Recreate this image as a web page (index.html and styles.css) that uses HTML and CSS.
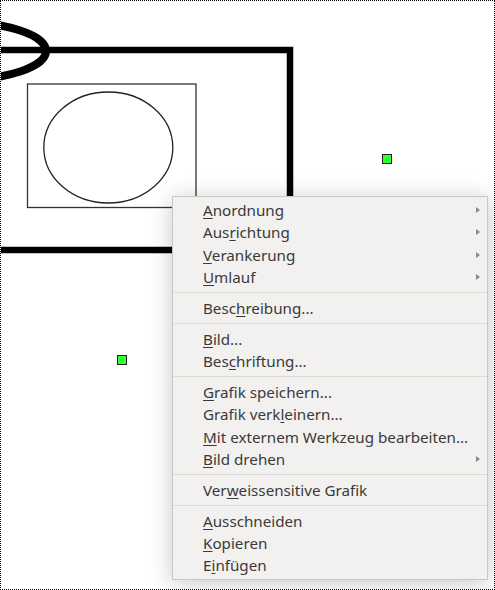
FILE: index.html
```html
<!DOCTYPE html>
<html>
<head>
<meta charset="utf-8">
<link rel="stylesheet" href="styles.css">
</head>
<body>
<div class="frame">
  <svg class="canvas" width="495" height="590" viewBox="0 0 495 590">
    <ellipse cx="-42" cy="51" rx="88" ry="29" fill="none" stroke="#000" stroke-width="8"/>
    <rect x="-20" y="50" width="310" height="200" fill="none" stroke="#000" stroke-width="6.5"/>
    <rect x="27.5" y="84" width="168.5" height="123.5" fill="none" stroke="#333" stroke-width="1.3"/>
    <ellipse cx="108.3" cy="147.5" rx="64.5" ry="55.5" fill="none" stroke="#222" stroke-width="1.3"/>
    <rect x="382.5" y="154.5" width="9" height="9" fill="#33ff33" stroke="#222" stroke-width="1"/>
    <rect x="117.5" y="355.5" width="9" height="9" fill="#33ff33" stroke="#222" stroke-width="1"/>
  </svg>
  <div class="menu">
    <div class="item sub"><span><u>A</u>nordnung</span><i class="arrow"></i></div>
    <div class="item sub"><span>Aus<u>r</u>ichtung</span><i class="arrow"></i></div>
    <div class="item sub"><span><u>V</u>erankerung</span><i class="arrow"></i></div>
    <div class="item sub"><span><u>U</u>mlauf</span><i class="arrow"></i></div>
    <div class="sep"></div>
    <div class="item"><span>Besc<u>h</u>reibung...</span></div>
    <div class="sep"></div>
    <div class="item"><span><u>B</u>ild...</span></div>
    <div class="item"><span>Bes<u>c</u>hriftung...</span></div>
    <div class="sep"></div>
    <div class="item"><span><u>G</u>rafik speichern...</span></div>
    <div class="item"><span>Grafik verk<u>l</u>einern...</span></div>
    <div class="item"><span><u>M</u>it externem Werkzeug bearbeiten...</span></div>
    <div class="item sub"><span><u>B</u>ild drehen</span><i class="arrow"></i></div>
    <div class="sep"></div>
    <div class="item"><span>Ver<u>w</u>eissensitive Grafik</span></div>
    <div class="sep"></div>
    <div class="item"><span><u>A</u>usschneiden</span></div>
    <div class="item"><span><u>K</u>opieren</span></div>
    <div class="item"><span>E<u>i</u>nfügen</span></div>
  </div>
</div>
</body>
</html>
```
FILE: styles.css
```css
html, body {
  margin: 0;
  padding: 0;
  background: #fff;
}
.frame {
  position: relative;
  width: 495px;
  height: 590px;
  box-sizing: border-box;
  border: 1px dotted #000;
  overflow: hidden;
  background: #fff;
}
.canvas {
  position: absolute;
  left: -1px;
  top: -1px;
  display: block;
}
.menu {
  position: absolute;
  left: 171px;
  top: 195px;
  width: 316px;
  box-sizing: border-box;
  padding: 2px 0 3px;
  background: #f2f1f0;
  border: 1px solid #c9c7c4;
  box-shadow: 0 3px 22px rgba(0, 0, 0, 0.22);
  font-family: "Noto Sans", sans-serif;
  font-size: 15.2px;
  color: #3a3a3a;
}
.item {
  display: flex;
  align-items: center;
  justify-content: space-between;
  height: 22.3px;
  padding: 0 7px 0 30px;
  white-space: nowrap;
}
.item u {
  text-decoration: underline;
  text-underline-offset: 2px;
}
.arrow {
  width: 0;
  height: 0;
  border-left: 4px solid #8a8a8a;
  border-top: 3.5px solid transparent;
  border-bottom: 3.5px solid transparent;
}
.sep {
  height: 8.6px;
  display: flex;
  align-items: center;
}
.sep::before {
  content: "";
  display: block;
  width: 100%;
  height: 1px;
  background: #dcdad6;
}
```
